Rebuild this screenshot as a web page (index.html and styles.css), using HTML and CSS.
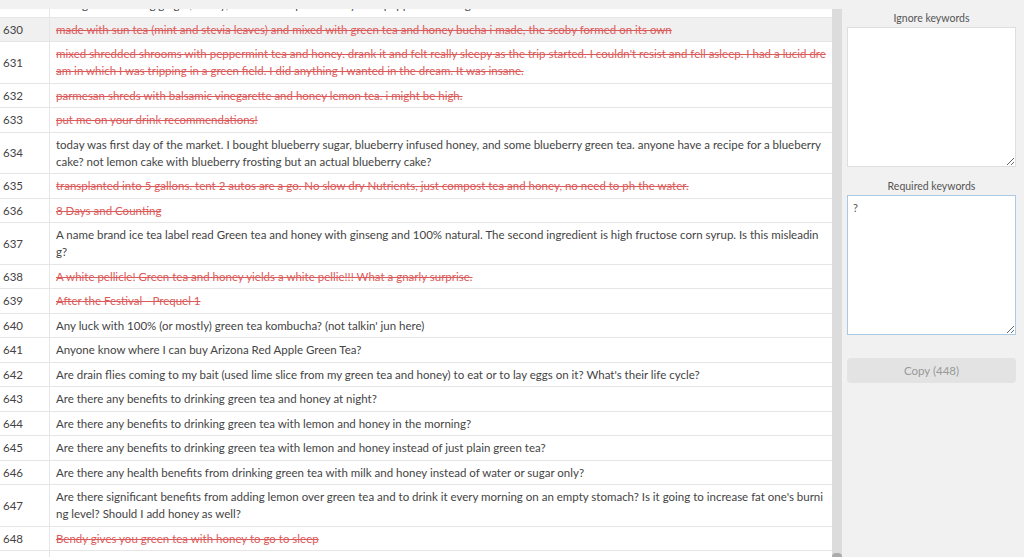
FILE: index.html
```html
<!DOCTYPE html>
<html lang="en">
<head>
    <meta charset="UTF-8">
    <meta name="viewport" content="width=device-width, initial-scale=1.0">
    <title>Keyword filter</title>
    <link rel="stylesheet" href="styles.css">
</head>
<body>
    <div class="layout">
        <div class="list-wrap">
            <div class="list">
                <table class="posts">
                    <tr><td class="num">629</td><td class="text">Thoughts on mixing ginger, honey, lemon and a pinch of cayenne pepper into hot green tea?</td></tr>
                    <tr class="hover"><td class="num">630</td><td class="text skip">made with sun tea (mint and stevia leaves) and mixed with green tea and honey bucha i made, the scoby formed on its own</td></tr>
                    <tr><td class="num">631</td><td class="text skip">mixed shredded shrooms with peppermint tea and honey. drank it and felt really sleepy as the trip started. I couldn't resist and fell asleep. I had a lucid dream in which I was tripping in a green field. I did anything I wanted in the dream. It was insane.</td></tr>
                    <tr><td class="num">632</td><td class="text skip">parmesan shreds with balsamic vinegarette and honey lemon tea. i might be high.</td></tr>
                    <tr><td class="num">633</td><td class="text skip">put me on your drink recommendations!</td></tr>
                    <tr><td class="num">634</td><td class="text">today was first day of the market. I bought blueberry sugar, blueberry infused honey, and some blueberry green tea. anyone have a recipe for a blueberry cake? not lemon cake with blueberry frosting but an actual blueberry cake?</td></tr>
                    <tr><td class="num">635</td><td class="text skip">transplanted into 5 gallons. tent 2 autos are a go. No slow dry Nutrients, just compost tea and honey, no need to ph the water.</td></tr>
                    <tr><td class="num">636</td><td class="text skip">8 Days and Counting</td></tr>
                    <tr><td class="num">637</td><td class="text">A name brand ice tea label read Green tea and honey with ginseng and 100% natural. The second ingredient is high fructose corn syrup. Is this misleading?</td></tr>
                    <tr><td class="num">638</td><td class="text skip">A white pellicle! Green tea and honey yields a white pellie!!! What a gnarly surprise.</td></tr>
                    <tr><td class="num">639</td><td class="text skip">After the Festival - Prequel 1</td></tr>
                    <tr><td class="num">640</td><td class="text">Any luck with 100% (or mostly) green tea kombucha? (not talkin' jun here)</td></tr>
                    <tr><td class="num">641</td><td class="text">Anyone know where I can buy Arizona Red Apple Green Tea?</td></tr>
                    <tr><td class="num">642</td><td class="text">Are drain flies coming to my bait (used lime slice from my green tea and honey) to eat or to lay eggs on it? What's their life cycle?</td></tr>
                    <tr><td class="num">643</td><td class="text">Are there any benefits to drinking green tea and honey at night?</td></tr>
                    <tr><td class="num">644</td><td class="text">Are there any benefits to drinking green tea with lemon and honey in the morning?</td></tr>
                    <tr><td class="num">645</td><td class="text">Are there any benefits to drinking green tea with lemon and honey instead of just plain green tea?</td></tr>
                    <tr><td class="num">646</td><td class="text">Are there any health benefits from drinking green tea with milk and honey instead of water or sugar only?</td></tr>
                    <tr><td class="num">647</td><td class="text">Are there significant benefits from adding lemon over green tea and to drink it every morning on an empty stomach? Is it going to increase fat one's burning level? Should I add honey as well?</td></tr>
                    <tr><td class="num">648</td><td class="text skip">Bendy gives you green tea with honey to go to sleep</td></tr>
                    <tr><td class="num">649</td><td class="text">Best time of day to drink green tea with honey?</td></tr>
                </table>
            </div>
            <div class="scrollbar"><div class="thumb"></div></div>
        </div>
        <div class="side">
            <label class="side-label" for="ignore">Ignore keywords</label>
            <textarea id="ignore" class="keywords"></textarea>
            <label class="side-label second" for="required">Required keywords</label>
            <textarea id="required" class="keywords active">?</textarea>
            <button class="copy">Copy (448)</button>
        </div>
    </div>
</body>
</html>
```

FILE: styles.css
```css
html, body {
    margin: 0;
    height: 100%;
}
body {
    font-family: Lato, 'Open Sans', sans-serif;
    background: #f1f1f1;
    color: #444;
    overflow: hidden;
}
.layout {
    display: flex;
    height: 100%;
}
.list-wrap {
    flex: 1;
    display: flex;
    margin-top: 9px;
    min-width: 0;
}
.list {
    flex: 1;
    background: #fff;
    overflow: hidden;
}
.posts {
    width: 100%;
    border-collapse: collapse;
    margin-top: -16px;
    font-size: 11.5px;
    line-height: 17px;
}
.posts td {
    border-bottom: 1px solid #e6e6e6;
    padding: 3.25px 6px;
    vertical-align: middle;
}
.posts .num {
    width: 40px;
    padding-left: 3px;
    border-right: 1px solid #e6e6e6;
    color: #444;
}
.posts .text {
    word-break: break-all;
    color: #444;
}
.posts .skip {
    color: #dc5a5a;
    text-decoration: line-through;
}
.posts tr.hover td {
    background: #f0f0f0;
}
.scrollbar {
    width: 10px;
    background: #dcdcdc;
    display: flex;
    flex-direction: column;
    justify-content: flex-end;
}
.thumb {
    height: 4px;
    background: #ababab;
    border-radius: 5px 5px 0 0;
}
.side {
    width: 169px;
    padding: 9px 8px 0 5px;
    display: flex;
    flex-direction: column;
}
.side-label {
    font-size: 10.5px;
    line-height: 18px;
    color: #555;
    text-align: center;
}
.side-label.second {
    margin-top: 10px;
}
.keywords {
    box-sizing: border-box;
    width: 100%;
    height: 140px;
    margin: 0;
    padding: 5px;
    border: 1px solid #dedede;
    background: #fff;
    font-family: Lato, 'Open Sans', sans-serif;
    font-size: 11px;
    color: #555;
    outline: none;
}
.keywords.active {
    border-color: #a9c9e6;
}
.copy {
    margin-top: 23px;
    height: 25px;
    border: none;
    border-radius: 4px;
    background: #e3e3e3;
    color: #999;
    font-family: Lato, 'Open Sans', sans-serif;
    font-size: 11.5px;
}
```
